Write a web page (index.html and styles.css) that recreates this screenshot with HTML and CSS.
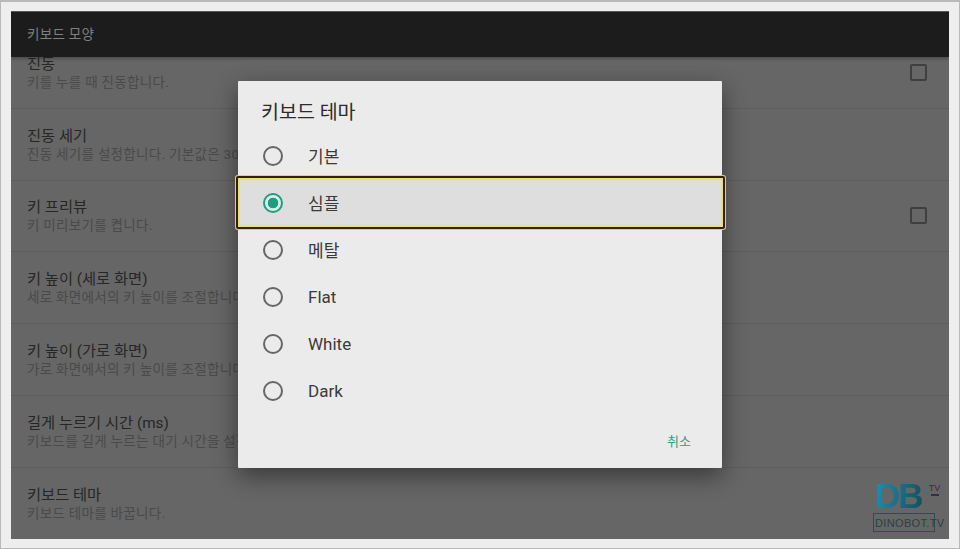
FILE: index.html
```html
<!DOCTYPE html>
<html lang="ko">
<head>
    <meta charset="UTF-8">
    <meta name="viewport" content="width=device-width, initial-scale=1.0">
    <title>키보드 모양</title>
    <link rel="stylesheet" href="styles.css">
</head>
<body>
    <div class="frame">
        <div class="screen">
            <div class="app-bar">키보드 모양</div>
            <div class="settings">
                <div class="row">
                    <div><div class="row-title">진동</div><div class="row-sub">키를 누를 때 진동합니다.</div></div>
                    <span class="checkbox"></span>
                </div>
                <div class="row">
                    <div><div class="row-title">진동 세기</div><div class="row-sub">진동 세기를 설정합니다. 기본값은 30ms입니다.</div></div>
                </div>
                <div class="row">
                    <div><div class="row-title">키 프리뷰</div><div class="row-sub">키 미리보기를 켭니다.</div></div>
                    <span class="checkbox"></span>
                </div>
                <div class="row">
                    <div><div class="row-title">키 높이 (세로 화면)</div><div class="row-sub">세로 화면에서의 키 높이를 조절합니다.</div></div>
                </div>
                <div class="row">
                    <div><div class="row-title">키 높이 (가로 화면)</div><div class="row-sub">가로 화면에서의 키 높이를 조절합니다.</div></div>
                </div>
                <div class="row">
                    <div><div class="row-title">길게 누르기 시간 (ms)</div><div class="row-sub">키보드를 길게 누르는 대기 시간을 설정합니다.</div></div>
                </div>
                <div class="row">
                    <div><div class="row-title">키보드 테마</div><div class="row-sub">키보드 테마를 바꿉니다.</div></div>
                </div>
            </div>

            <div class="dialog">
                <h2 class="dialog-title">키보드 테마</h2>
                <div class="option"><span class="radio"></span>기본</div>
                <div class="option option-selected"><span class="radio radio-on"></span>심플</div>
                <div class="option"><span class="radio"></span>메탈</div>
                <div class="option"><span class="radio"></span>Flat</div>
                <div class="option"><span class="radio"></span>White</div>
                <div class="option"><span class="radio"></span>Dark</div>
                <div class="dialog-actions"><span class="btn-cancel">취소</span></div>
            </div>

            <div class="logo">
                <div class="logo-top">
                    <span class="logo-db">DB</span>
                    <span class="logo-tv">TV</span>
                </div>
                <div class="logo-name">DINOBOT.TV</div>
            </div>
        </div>
    </div>
</body>
</html>
```

FILE: styles.css
```css
* {
    box-sizing: border-box;
}
html, body {
    margin: 0;
    height: 100%;
}
body {
    font-family: Roboto, "Noto Sans CJK KR", sans-serif;
    background-color: #eeeeee;
}
.frame {
    width: 960px;
    height: 549px;
    padding: 9px 10px 10px;
    border: 1px solid #b9b9b9;
    border-top-width: 2px;
}
.screen {
    position: relative;
    width: 100%;
    height: 528px;
    overflow: hidden;
    background-color: #666666;
    border-top: 1px solid #555;
}
.app-bar {
    position: relative;
    z-index: 1;
    height: 45px;
    padding: 0 0 4px 16px;
    display: flex;
    align-items: center;
    background-color: #1c1c1c;
    color: #808080;
    font-size: 13.5px;
    letter-spacing: 0.3px;
    box-shadow: 0 2px 3px rgba(0, 0, 0, 0.25);
}
.settings {
    margin-top: -20px;
}
.row {
    height: 71.8px;
    padding: 0 22px 0 16px;
    display: flex;
    align-items: center;
    justify-content: space-between;
    border-bottom: 1px solid #5e5e5e;
}
.row:last-child {
    border-bottom: none;
}
.row-title {
    font-size: 15.3px;
    line-height: 18px;
    padding-top: 1px;
    color: #262626;
}
.row-sub {
    font-size: 13.5px;
    line-height: 18px;
    letter-spacing: 0.3px;
    color: #4a4a4a;
}
.checkbox {
    width: 17px;
    height: 17px;
    border: 2px solid #3f3f3f;
    border-radius: 2px;
}
.dialog {
    position: absolute;
    left: 227px;
    top: 69px;
    width: 484px;
    height: 387px;
    background-color: #ebebeb;
    box-shadow: 0 8px 24px rgba(0, 0, 0, 0.45);
    border-radius: 1px;
    padding-top: 18px;
}
.dialog-title {
    margin: 0 0 5px;
    padding-left: 23px;
    font-size: 19.5px;
    line-height: 28px;
    font-weight: 400;
    color: #2b2b2b;
}
.option {
    height: 47px;
    padding-left: 25px;
    display: flex;
    align-items: center;
    gap: 25px;
    font-size: 17px;
    color: #3a3a3a;
}
.option-selected {
    position: relative;
    margin: -3px -3px -3px -2px;
    padding-left: 27px;
    height: 53px;
    background-color: #dedede;
    box-shadow: 0 0 0 1px #e6d257, inset 0 0 0 2px #2a2508, inset 0 0 0 4px #efdd78;
    border-radius: 2px;
}
.radio {
    width: 20px;
    height: 20px;
    border: 2px solid #666666;
    border-radius: 50%;
    flex-shrink: 0;
}
.radio-on {
    border-color: #1f9d80;
    background: radial-gradient(circle, #1f9d80 0, #1f9d80 5px, #d8efe9 5.6px);
}
.dialog-actions {
    display: flex;
    justify-content: flex-end;
    padding: 18px 31px 0 0;
}
.btn-cancel {
    font-size: 13px;
    line-height: 20px;
    color: #2f9e86;
}
.logo {
    position: absolute;
    left: 862px;
    top: 470px;
    width: 72px;
}
.logo-top {
    display: flex;
    align-items: flex-start;
    padding-left: 2px;
}
.logo-db {
    font-family: "Liberation Sans", sans-serif;
    font-size: 35px;
    line-height: 27px;
    font-weight: 700;
    letter-spacing: -2px;
    background: linear-gradient(100deg, #1f8fb0, #12505f);
    -webkit-background-clip: text;
    background-clip: text;
    color: transparent;
}
.logo-tv {
    position: relative;
    margin: 1px 0 0 4px;
    width: 18px;
    height: 11px;
    border: 1px solid #3d7480;
    font-family: "Liberation Sans", sans-serif;
    font-size: 9px;
    line-height: 9px;
    text-align: center;
    color: #333;
}
.logo-tv::after {
    content: "";
    position: absolute;
    left: 4px;
    right: 4px;
    top: 10px;
    height: 2px;
    background-color: #333;
}
.logo-name {
    margin-top: 4px;
    width: 62px;
    height: 19px;
    border: 1px solid #24505c;
    font-family: "Liberation Sans", sans-serif;
    font-size: 11px;
    line-height: 18px;
    letter-spacing: 0.35px;
    white-space: nowrap;
    color: #2c3f45;
    padding-left: 1px;
}
```
